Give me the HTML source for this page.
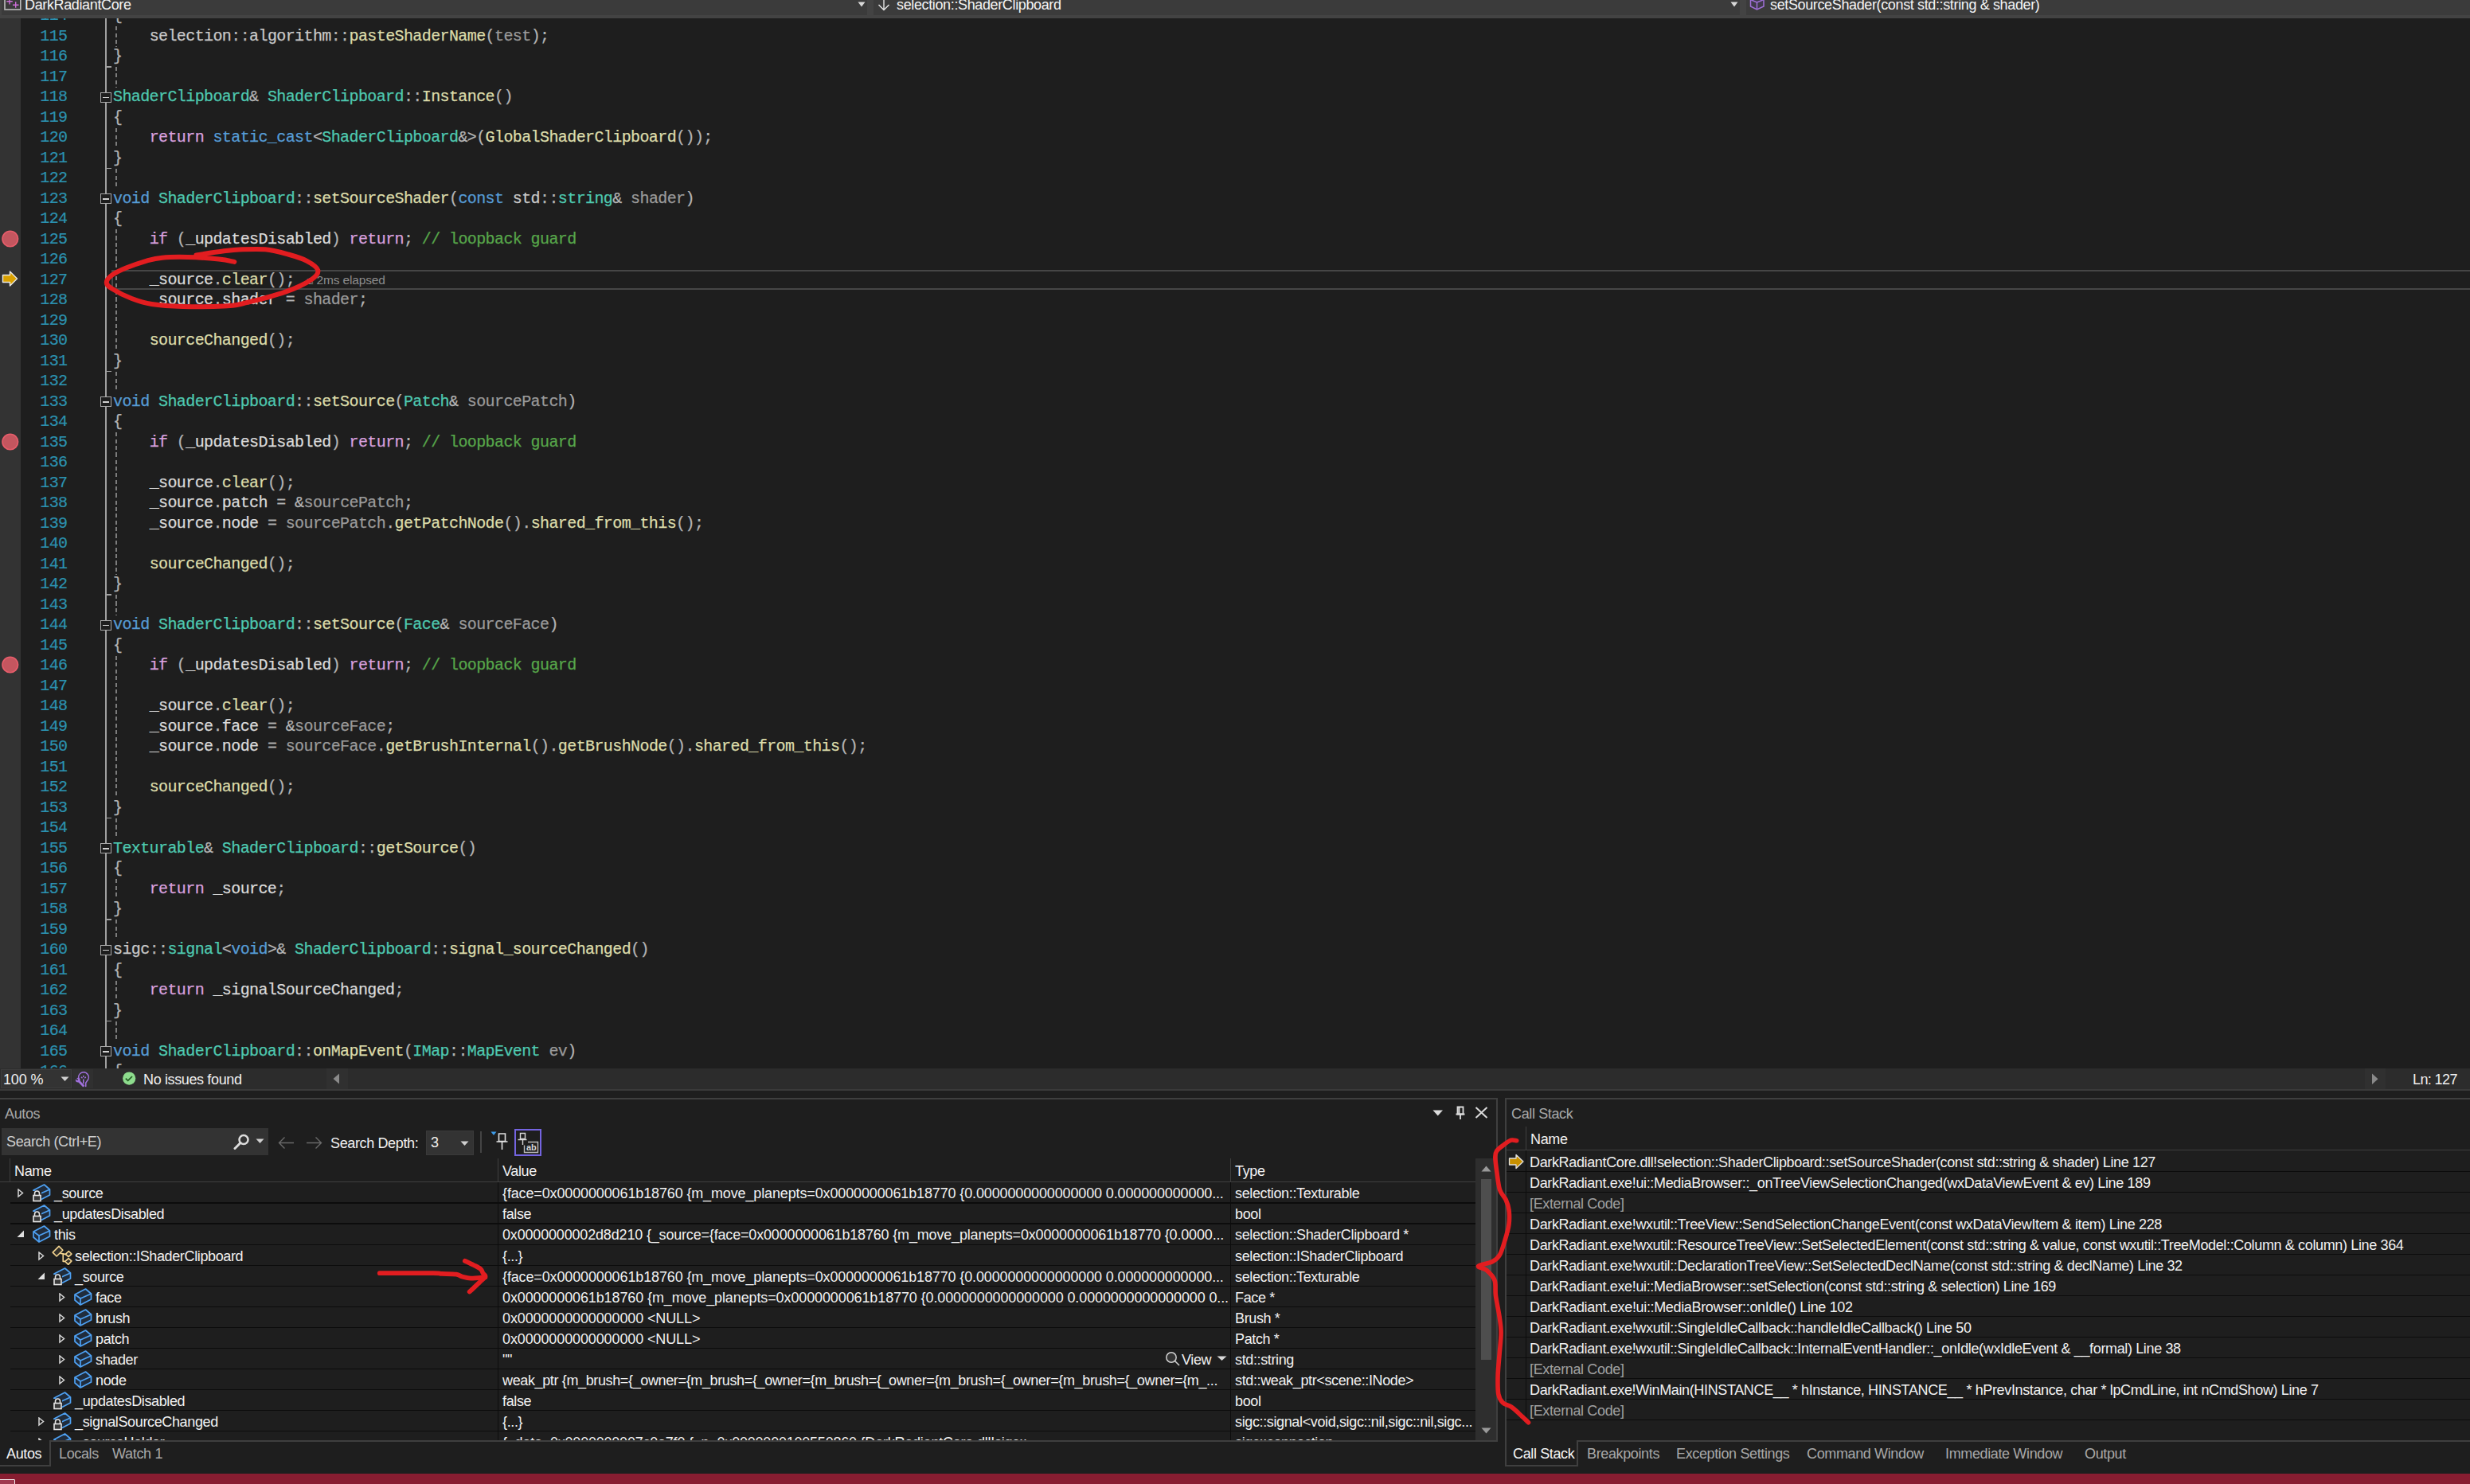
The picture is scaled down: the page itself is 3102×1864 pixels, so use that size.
<!DOCTYPE html><html><head><meta charset="utf-8"><style>
*{box-sizing:border-box}
html,body{margin:0;padding:0}
body{width:3102px;height:1864px;background:#1e1e1e;position:relative;overflow:hidden;font-family:"Liberation Sans",sans-serif;}
.abs{position:absolute}
.ln{position:absolute;left:0;width:84.5px;-webkit-text-stroke:0.2px #2B91AF;text-align:right;font-family:"Liberation Mono",monospace;font-size:20px;letter-spacing:-0.5985px;line-height:25.5px;color:#2B91AF;white-space:pre}
.cl{position:absolute;left:142px;-webkit-text-stroke:0.25px currentColor;font-family:"Liberation Mono",monospace;font-size:20px;letter-spacing:-0.5985px;line-height:25.5px;white-space:pre;color:#DCDCDC}
.ui{font-family:"Liberation Sans",sans-serif;font-size:18px;letter-spacing:-0.3px;white-space:pre;color:#f1f1f1;position:absolute;line-height:22px}
.sep{position:absolute;background:#0c0c0c}
</style></head><body>

<div class="abs" style="left:0;top:0;width:3102px;height:23px;background:#434343"></div>
<div class="abs" style="left:2px;top:0;width:1087px;height:19px;background:#3b3b3b"></div>
<div class="abs" style="left:1097px;top:0;width:1088px;height:19px;background:#3b3b3b"></div>
<div class="abs" style="left:2193px;top:0;width:909px;height:19px;background:#3b3b3b"></div>
<svg class="abs" style="left:1077px;top:2px" width="10" height="7"><path d="M0.5 0.5 L9.5 0.5 L5 6.5Z" fill="#d8d8d8"/></svg>
<svg class="abs" style="left:2173px;top:2px" width="10" height="7"><path d="M0.5 0.5 L9.5 0.5 L5 6.5Z" fill="#d8d8d8"/></svg>
<svg class="abs" style="left:4px;top:-3px" width="24" height="17"><rect x="2" y="-2" width="19.8" height="17" fill="#393939" stroke="#bcbcbc" stroke-width="1.6"/><path d="M8 0 v8.5 M4.3 4.7 h7.5 M15.7 5.2 v7.5 M12 9.2 h7.5" stroke="#cc6ed8" stroke-width="1.4"/></svg>
<div class="ui" style="left:31px;top:-5px;color:#f4f4f4;letter-spacing:-0.366px">DarkRadiantCore</div>
<svg class="abs" style="left:1101px;top:-2px" width="18" height="17"><path d="M9 0 V14 M2.5 8 L9 14.5 L15.5 8" fill="none" stroke="#e6e6e6" stroke-width="1.4"/></svg>
<div class="ui" style="left:1126px;top:-5px;color:#f4f4f4;letter-spacing:-0.366px">selection::ShaderClipboard</div>
<svg class="abs" style="left:2197px;top:-2px" width="20" height="17"><path d="M1.5 1.5 L9.5 -2 L18 1.5 V10 L9.5 14 L1.5 10Z" fill="#3f3a4a" stroke="#a070d8" stroke-width="1.5"/><path d="M1.5 1.5 L9.5 5 L18 1.5 M9.5 5 V14" fill="none" stroke="#a070d8" stroke-width="1.5"/></svg>
<div class="ui" style="left:2223px;top:-5px;color:#f4f4f4;letter-spacing:-0.366px">setSourceShader(const std::string &amp; shader)</div>
<div class="abs" style="left:0;top:23px;width:3102px;height:1319px;overflow:hidden;background:#1e1e1e">
<div class="abs" style="left:0;top:0;width:26px;height:1319px;background:#333333"></div>
<div class="abs" style="left:140px;top:315.5px;width:3000px;height:25px;border:2px solid #464646;border-right:none"></div>
<div class="abs" style="left:132px;top:0;width:2px;height:1319px;background:#a0a0a0"></div>
<div class="abs" style="left:126px;top:92.75px;width:14px;height:13px;border:1.5px solid #a8a8a8;background:#1e1e1e"></div>
<div class="abs" style="left:129px;top:98.5px;width:8px;height:1.5px;background:#d0d0d0"></div>
<div class="abs" style="left:126px;top:220.25px;width:14px;height:13px;border:1.5px solid #a8a8a8;background:#1e1e1e"></div>
<div class="abs" style="left:129px;top:226.0px;width:8px;height:1.5px;background:#d0d0d0"></div>
<div class="abs" style="left:126px;top:475.25px;width:14px;height:13px;border:1.5px solid #a8a8a8;background:#1e1e1e"></div>
<div class="abs" style="left:129px;top:481.0px;width:8px;height:1.5px;background:#d0d0d0"></div>
<div class="abs" style="left:126px;top:755.75px;width:14px;height:13px;border:1.5px solid #a8a8a8;background:#1e1e1e"></div>
<div class="abs" style="left:129px;top:761.5px;width:8px;height:1.5px;background:#d0d0d0"></div>
<div class="abs" style="left:126px;top:1036.25px;width:14px;height:13px;border:1.5px solid #a8a8a8;background:#1e1e1e"></div>
<div class="abs" style="left:129px;top:1042.0px;width:8px;height:1.5px;background:#d0d0d0"></div>
<div class="abs" style="left:126px;top:1163.75px;width:14px;height:13px;border:1.5px solid #a8a8a8;background:#1e1e1e"></div>
<div class="abs" style="left:129px;top:1169.5px;width:8px;height:1.5px;background:#d0d0d0"></div>
<div class="abs" style="left:126px;top:1291.25px;width:14px;height:13px;border:1.5px solid #a8a8a8;background:#1e1e1e"></div>
<div class="abs" style="left:129px;top:1297.0px;width:8px;height:1.5px;background:#d0d0d0"></div>
<div class="abs" style="left:133px;top:60.0px;width:7px;height:1.5px;background:#a0a0a0"></div>
<div class="abs" style="left:133px;top:187.5px;width:7px;height:1.5px;background:#a0a0a0"></div>
<div class="abs" style="left:133px;top:442.5px;width:7px;height:1.5px;background:#a0a0a0"></div>
<div class="abs" style="left:133px;top:723.0px;width:7px;height:1.5px;background:#a0a0a0"></div>
<div class="abs" style="left:133px;top:1003.5px;width:7px;height:1.5px;background:#a0a0a0"></div>
<div class="abs" style="left:133px;top:1131.0px;width:7px;height:1.5px;background:#a0a0a0"></div>
<div class="abs" style="left:133px;top:1258.5px;width:7px;height:1.5px;background:#a0a0a0"></div>
<div class="abs" style="left:145px;top:10.0px;width:2px;height:25.5px;background:repeating-linear-gradient(to bottom,#7c7c7c 0,#7c7c7c 5px,transparent 5px,transparent 8.5px)"></div>
<div class="abs" style="left:145px;top:61.0px;width:2px;height:25.5px;background:repeating-linear-gradient(to bottom,#7c7c7c 0,#7c7c7c 5px,transparent 5px,transparent 8.5px)"></div>
<div class="abs" style="left:145px;top:137.5px;width:2px;height:25.5px;background:repeating-linear-gradient(to bottom,#7c7c7c 0,#7c7c7c 5px,transparent 5px,transparent 8.5px)"></div>
<div class="abs" style="left:145px;top:188.5px;width:2px;height:25.5px;background:repeating-linear-gradient(to bottom,#7c7c7c 0,#7c7c7c 5px,transparent 5px,transparent 8.5px)"></div>
<div class="abs" style="left:145px;top:265.0px;width:2px;height:25.5px;background:repeating-linear-gradient(to bottom,#7c7c7c 0,#7c7c7c 5px,transparent 5px,transparent 8.5px)"></div>
<div class="abs" style="left:145px;top:290.5px;width:2px;height:25.5px;background:repeating-linear-gradient(to bottom,#7c7c7c 0,#7c7c7c 5px,transparent 5px,transparent 8.5px)"></div>
<div class="abs" style="left:145px;top:316.0px;width:2px;height:25.5px;background:repeating-linear-gradient(to bottom,#7c7c7c 0,#7c7c7c 5px,transparent 5px,transparent 8.5px)"></div>
<div class="abs" style="left:145px;top:341.5px;width:2px;height:25.5px;background:repeating-linear-gradient(to bottom,#7c7c7c 0,#7c7c7c 5px,transparent 5px,transparent 8.5px)"></div>
<div class="abs" style="left:145px;top:367.0px;width:2px;height:25.5px;background:repeating-linear-gradient(to bottom,#7c7c7c 0,#7c7c7c 5px,transparent 5px,transparent 8.5px)"></div>
<div class="abs" style="left:145px;top:392.5px;width:2px;height:25.5px;background:repeating-linear-gradient(to bottom,#7c7c7c 0,#7c7c7c 5px,transparent 5px,transparent 8.5px)"></div>
<div class="abs" style="left:145px;top:443.5px;width:2px;height:25.5px;background:repeating-linear-gradient(to bottom,#7c7c7c 0,#7c7c7c 5px,transparent 5px,transparent 8.5px)"></div>
<div class="abs" style="left:145px;top:520.0px;width:2px;height:25.5px;background:repeating-linear-gradient(to bottom,#7c7c7c 0,#7c7c7c 5px,transparent 5px,transparent 8.5px)"></div>
<div class="abs" style="left:145px;top:545.5px;width:2px;height:25.5px;background:repeating-linear-gradient(to bottom,#7c7c7c 0,#7c7c7c 5px,transparent 5px,transparent 8.5px)"></div>
<div class="abs" style="left:145px;top:571.0px;width:2px;height:25.5px;background:repeating-linear-gradient(to bottom,#7c7c7c 0,#7c7c7c 5px,transparent 5px,transparent 8.5px)"></div>
<div class="abs" style="left:145px;top:596.5px;width:2px;height:25.5px;background:repeating-linear-gradient(to bottom,#7c7c7c 0,#7c7c7c 5px,transparent 5px,transparent 8.5px)"></div>
<div class="abs" style="left:145px;top:622.0px;width:2px;height:25.5px;background:repeating-linear-gradient(to bottom,#7c7c7c 0,#7c7c7c 5px,transparent 5px,transparent 8.5px)"></div>
<div class="abs" style="left:145px;top:647.5px;width:2px;height:25.5px;background:repeating-linear-gradient(to bottom,#7c7c7c 0,#7c7c7c 5px,transparent 5px,transparent 8.5px)"></div>
<div class="abs" style="left:145px;top:673.0px;width:2px;height:25.5px;background:repeating-linear-gradient(to bottom,#7c7c7c 0,#7c7c7c 5px,transparent 5px,transparent 8.5px)"></div>
<div class="abs" style="left:145px;top:724.0px;width:2px;height:25.5px;background:repeating-linear-gradient(to bottom,#7c7c7c 0,#7c7c7c 5px,transparent 5px,transparent 8.5px)"></div>
<div class="abs" style="left:145px;top:800.5px;width:2px;height:25.5px;background:repeating-linear-gradient(to bottom,#7c7c7c 0,#7c7c7c 5px,transparent 5px,transparent 8.5px)"></div>
<div class="abs" style="left:145px;top:826.0px;width:2px;height:25.5px;background:repeating-linear-gradient(to bottom,#7c7c7c 0,#7c7c7c 5px,transparent 5px,transparent 8.5px)"></div>
<div class="abs" style="left:145px;top:851.5px;width:2px;height:25.5px;background:repeating-linear-gradient(to bottom,#7c7c7c 0,#7c7c7c 5px,transparent 5px,transparent 8.5px)"></div>
<div class="abs" style="left:145px;top:877.0px;width:2px;height:25.5px;background:repeating-linear-gradient(to bottom,#7c7c7c 0,#7c7c7c 5px,transparent 5px,transparent 8.5px)"></div>
<div class="abs" style="left:145px;top:902.5px;width:2px;height:25.5px;background:repeating-linear-gradient(to bottom,#7c7c7c 0,#7c7c7c 5px,transparent 5px,transparent 8.5px)"></div>
<div class="abs" style="left:145px;top:928.0px;width:2px;height:25.5px;background:repeating-linear-gradient(to bottom,#7c7c7c 0,#7c7c7c 5px,transparent 5px,transparent 8.5px)"></div>
<div class="abs" style="left:145px;top:953.5px;width:2px;height:25.5px;background:repeating-linear-gradient(to bottom,#7c7c7c 0,#7c7c7c 5px,transparent 5px,transparent 8.5px)"></div>
<div class="abs" style="left:145px;top:1004.5px;width:2px;height:25.5px;background:repeating-linear-gradient(to bottom,#7c7c7c 0,#7c7c7c 5px,transparent 5px,transparent 8.5px)"></div>
<div class="abs" style="left:145px;top:1081.0px;width:2px;height:25.5px;background:repeating-linear-gradient(to bottom,#7c7c7c 0,#7c7c7c 5px,transparent 5px,transparent 8.5px)"></div>
<div class="abs" style="left:145px;top:1132.0px;width:2px;height:25.5px;background:repeating-linear-gradient(to bottom,#7c7c7c 0,#7c7c7c 5px,transparent 5px,transparent 8.5px)"></div>
<div class="abs" style="left:145px;top:1208.5px;width:2px;height:25.5px;background:repeating-linear-gradient(to bottom,#7c7c7c 0,#7c7c7c 5px,transparent 5px,transparent 8.5px)"></div>
<div class="abs" style="left:145px;top:1259.5px;width:2px;height:25.5px;background:repeating-linear-gradient(to bottom,#7c7c7c 0,#7c7c7c 5px,transparent 5px,transparent 8.5px)"></div>
<div class="ln" style="top:-15.58px">114</div>
<div class="cl" style="top:-15.58px"><span style="color:#B4B4B4">{</span></div>
<div class="ln" style="top:9.92px">115</div>
<div class="cl" style="top:9.92px"><span style="color:#B4B4B4">    </span><span style="color:#C8C8C8">selection</span><span style="color:#B4B4B4">::</span><span style="color:#C8C8C8">algorithm</span><span style="color:#B4B4B4">::</span><span style="color:#DCDCAA">pasteShaderName</span><span style="color:#B4B4B4">(</span><span style="color:#9A9A9A">test</span><span style="color:#B4B4B4">);</span></div>
<div class="ln" style="top:35.42px">116</div>
<div class="cl" style="top:35.42px"><span style="color:#B4B4B4">}</span></div>
<div class="ln" style="top:60.92px">117</div>
<div class="ln" style="top:86.42px">118</div>
<div class="cl" style="top:86.42px"><span style="color:#4EC9B0">ShaderClipboard</span><span style="color:#B4B4B4">&amp;</span><span style="color:#B4B4B4"> </span><span style="color:#4EC9B0">ShaderClipboard</span><span style="color:#B4B4B4">::</span><span style="color:#DCDCAA">Instance</span><span style="color:#B4B4B4">()</span></div>
<div class="ln" style="top:111.92px">119</div>
<div class="cl" style="top:111.92px"><span style="color:#B4B4B4">{</span></div>
<div class="ln" style="top:137.42px">120</div>
<div class="cl" style="top:137.42px"><span style="color:#B4B4B4">    </span><span style="color:#D8A0DF">return</span><span style="color:#B4B4B4"> </span><span style="color:#569CD6">static_cast</span><span style="color:#B4B4B4">&lt;</span><span style="color:#4EC9B0">ShaderClipboard</span><span style="color:#B4B4B4">&amp;&gt;</span><span style="color:#B4B4B4">(</span><span style="color:#DCDCAA">GlobalShaderClipboard</span><span style="color:#B4B4B4">());</span></div>
<div class="ln" style="top:162.92px">121</div>
<div class="cl" style="top:162.92px"><span style="color:#B4B4B4">}</span></div>
<div class="ln" style="top:188.42px">122</div>
<div class="ln" style="top:213.92px">123</div>
<div class="cl" style="top:213.92px"><span style="color:#569CD6">void</span><span style="color:#B4B4B4"> </span><span style="color:#4EC9B0">ShaderClipboard</span><span style="color:#B4B4B4">::</span><span style="color:#DCDCAA">setSourceShader</span><span style="color:#B4B4B4">(</span><span style="color:#569CD6">const</span><span style="color:#B4B4B4"> </span><span style="color:#C8C8C8">std</span><span style="color:#B4B4B4">::</span><span style="color:#4EC9B0">string</span><span style="color:#B4B4B4">&amp;</span><span style="color:#B4B4B4"> </span><span style="color:#9A9A9A">shader</span><span style="color:#B4B4B4">)</span></div>
<div class="ln" style="top:239.42px">124</div>
<div class="cl" style="top:239.42px"><span style="color:#B4B4B4">{</span></div>
<div class="ln" style="top:264.92px">125</div>
<div class="cl" style="top:264.92px"><span style="color:#B4B4B4">    </span><span style="color:#D8A0DF">if</span><span style="color:#B4B4B4"> (</span><span style="color:#DADADA">_updatesDisabled</span><span style="color:#B4B4B4">) </span><span style="color:#D8A0DF">return</span><span style="color:#B4B4B4">; </span><span style="color:#57A64A">// loopback guard</span></div>
<div class="ln" style="top:290.42px">126</div>
<div class="ln" style="top:315.92px">127</div>
<div class="cl" style="top:315.92px"><span style="color:#B4B4B4">    </span><span style="color:#DADADA">_source</span><span style="color:#B4B4B4">.</span><span style="color:#DCDCAA">clear</span><span style="color:#B4B4B4">();</span></div>
<div class="ln" style="top:341.42px">128</div>
<div class="cl" style="top:341.42px"><span style="color:#B4B4B4">    </span><span style="color:#DADADA">_source</span><span style="color:#B4B4B4">.</span><span style="color:#DADADA">shader</span><span style="color:#B4B4B4"> </span><span style="color:#B4B4B4">=</span><span style="color:#B4B4B4"> </span><span style="color:#9A9A9A">shader</span><span style="color:#B4B4B4">;</span></div>
<div class="ln" style="top:366.92px">129</div>
<div class="ln" style="top:392.42px">130</div>
<div class="cl" style="top:392.42px"><span style="color:#B4B4B4">    </span><span style="color:#DCDCAA">sourceChanged</span><span style="color:#B4B4B4">();</span></div>
<div class="ln" style="top:417.92px">131</div>
<div class="cl" style="top:417.92px"><span style="color:#B4B4B4">}</span></div>
<div class="ln" style="top:443.42px">132</div>
<div class="ln" style="top:468.92px">133</div>
<div class="cl" style="top:468.92px"><span style="color:#569CD6">void</span><span style="color:#B4B4B4"> </span><span style="color:#4EC9B0">ShaderClipboard</span><span style="color:#B4B4B4">::</span><span style="color:#DCDCAA">setSource</span><span style="color:#B4B4B4">(</span><span style="color:#4EC9B0">Patch</span><span style="color:#B4B4B4">&amp;</span><span style="color:#B4B4B4"> </span><span style="color:#9A9A9A">sourcePatch</span><span style="color:#B4B4B4">)</span></div>
<div class="ln" style="top:494.42px">134</div>
<div class="cl" style="top:494.42px"><span style="color:#B4B4B4">{</span></div>
<div class="ln" style="top:519.92px">135</div>
<div class="cl" style="top:519.92px"><span style="color:#B4B4B4">    </span><span style="color:#D8A0DF">if</span><span style="color:#B4B4B4"> (</span><span style="color:#DADADA">_updatesDisabled</span><span style="color:#B4B4B4">) </span><span style="color:#D8A0DF">return</span><span style="color:#B4B4B4">; </span><span style="color:#57A64A">// loopback guard</span></div>
<div class="ln" style="top:545.42px">136</div>
<div class="ln" style="top:570.92px">137</div>
<div class="cl" style="top:570.92px"><span style="color:#B4B4B4">    </span><span style="color:#DADADA">_source</span><span style="color:#B4B4B4">.</span><span style="color:#DCDCAA">clear</span><span style="color:#B4B4B4">();</span></div>
<div class="ln" style="top:596.42px">138</div>
<div class="cl" style="top:596.42px"><span style="color:#B4B4B4">    </span><span style="color:#DADADA">_source</span><span style="color:#B4B4B4">.</span><span style="color:#DADADA">patch</span><span style="color:#B4B4B4"> </span><span style="color:#B4B4B4">=</span><span style="color:#B4B4B4"> </span><span style="color:#B4B4B4">&amp;</span><span style="color:#9A9A9A">sourcePatch</span><span style="color:#B4B4B4">;</span></div>
<div class="ln" style="top:621.92px">139</div>
<div class="cl" style="top:621.92px"><span style="color:#B4B4B4">    </span><span style="color:#DADADA">_source</span><span style="color:#B4B4B4">.</span><span style="color:#DADADA">node</span><span style="color:#B4B4B4"> </span><span style="color:#B4B4B4">=</span><span style="color:#B4B4B4"> </span><span style="color:#9A9A9A">sourcePatch</span><span style="color:#B4B4B4">.</span><span style="color:#DCDCAA">getPatchNode</span><span style="color:#B4B4B4">()</span><span style="color:#B4B4B4">.</span><span style="color:#DCDCAA">shared_from_this</span><span style="color:#B4B4B4">();</span></div>
<div class="ln" style="top:647.42px">140</div>
<div class="ln" style="top:672.92px">141</div>
<div class="cl" style="top:672.92px"><span style="color:#B4B4B4">    </span><span style="color:#DCDCAA">sourceChanged</span><span style="color:#B4B4B4">();</span></div>
<div class="ln" style="top:698.42px">142</div>
<div class="cl" style="top:698.42px"><span style="color:#B4B4B4">}</span></div>
<div class="ln" style="top:723.92px">143</div>
<div class="ln" style="top:749.42px">144</div>
<div class="cl" style="top:749.42px"><span style="color:#569CD6">void</span><span style="color:#B4B4B4"> </span><span style="color:#4EC9B0">ShaderClipboard</span><span style="color:#B4B4B4">::</span><span style="color:#DCDCAA">setSource</span><span style="color:#B4B4B4">(</span><span style="color:#4EC9B0">Face</span><span style="color:#B4B4B4">&amp;</span><span style="color:#B4B4B4"> </span><span style="color:#9A9A9A">sourceFace</span><span style="color:#B4B4B4">)</span></div>
<div class="ln" style="top:774.92px">145</div>
<div class="cl" style="top:774.92px"><span style="color:#B4B4B4">{</span></div>
<div class="ln" style="top:800.42px">146</div>
<div class="cl" style="top:800.42px"><span style="color:#B4B4B4">    </span><span style="color:#D8A0DF">if</span><span style="color:#B4B4B4"> (</span><span style="color:#DADADA">_updatesDisabled</span><span style="color:#B4B4B4">) </span><span style="color:#D8A0DF">return</span><span style="color:#B4B4B4">; </span><span style="color:#57A64A">// loopback guard</span></div>
<div class="ln" style="top:825.92px">147</div>
<div class="ln" style="top:851.42px">148</div>
<div class="cl" style="top:851.42px"><span style="color:#B4B4B4">    </span><span style="color:#DADADA">_source</span><span style="color:#B4B4B4">.</span><span style="color:#DCDCAA">clear</span><span style="color:#B4B4B4">();</span></div>
<div class="ln" style="top:876.92px">149</div>
<div class="cl" style="top:876.92px"><span style="color:#B4B4B4">    </span><span style="color:#DADADA">_source</span><span style="color:#B4B4B4">.</span><span style="color:#DADADA">face</span><span style="color:#B4B4B4"> </span><span style="color:#B4B4B4">=</span><span style="color:#B4B4B4"> </span><span style="color:#B4B4B4">&amp;</span><span style="color:#9A9A9A">sourceFace</span><span style="color:#B4B4B4">;</span></div>
<div class="ln" style="top:902.42px">150</div>
<div class="cl" style="top:902.42px"><span style="color:#B4B4B4">    </span><span style="color:#DADADA">_source</span><span style="color:#B4B4B4">.</span><span style="color:#DADADA">node</span><span style="color:#B4B4B4"> </span><span style="color:#B4B4B4">=</span><span style="color:#B4B4B4"> </span><span style="color:#9A9A9A">sourceFace</span><span style="color:#B4B4B4">.</span><span style="color:#DCDCAA">getBrushInternal</span><span style="color:#B4B4B4">()</span><span style="color:#B4B4B4">.</span><span style="color:#DCDCAA">getBrushNode</span><span style="color:#B4B4B4">()</span><span style="color:#B4B4B4">.</span><span style="color:#DCDCAA">shared_from_this</span><span style="color:#B4B4B4">();</span></div>
<div class="ln" style="top:927.92px">151</div>
<div class="ln" style="top:953.42px">152</div>
<div class="cl" style="top:953.42px"><span style="color:#B4B4B4">    </span><span style="color:#DCDCAA">sourceChanged</span><span style="color:#B4B4B4">();</span></div>
<div class="ln" style="top:978.92px">153</div>
<div class="cl" style="top:978.92px"><span style="color:#B4B4B4">}</span></div>
<div class="ln" style="top:1004.42px">154</div>
<div class="ln" style="top:1029.92px">155</div>
<div class="cl" style="top:1029.92px"><span style="color:#4EC9B0">Texturable</span><span style="color:#B4B4B4">&amp;</span><span style="color:#B4B4B4"> </span><span style="color:#4EC9B0">ShaderClipboard</span><span style="color:#B4B4B4">::</span><span style="color:#DCDCAA">getSource</span><span style="color:#B4B4B4">()</span></div>
<div class="ln" style="top:1055.42px">156</div>
<div class="cl" style="top:1055.42px"><span style="color:#B4B4B4">{</span></div>
<div class="ln" style="top:1080.92px">157</div>
<div class="cl" style="top:1080.92px"><span style="color:#B4B4B4">    </span><span style="color:#D8A0DF">return</span><span style="color:#B4B4B4"> </span><span style="color:#DADADA">_source</span><span style="color:#B4B4B4">;</span></div>
<div class="ln" style="top:1106.42px">158</div>
<div class="cl" style="top:1106.42px"><span style="color:#B4B4B4">}</span></div>
<div class="ln" style="top:1131.92px">159</div>
<div class="ln" style="top:1157.42px">160</div>
<div class="cl" style="top:1157.42px"><span style="color:#C8C8C8">sigc</span><span style="color:#B4B4B4">::</span><span style="color:#4EC9B0">signal</span><span style="color:#B4B4B4">&lt;</span><span style="color:#569CD6">void</span><span style="color:#B4B4B4">&gt;&amp;</span><span style="color:#B4B4B4"> </span><span style="color:#4EC9B0">ShaderClipboard</span><span style="color:#B4B4B4">::</span><span style="color:#DCDCAA">signal_sourceChanged</span><span style="color:#B4B4B4">()</span></div>
<div class="ln" style="top:1182.92px">161</div>
<div class="cl" style="top:1182.92px"><span style="color:#B4B4B4">{</span></div>
<div class="ln" style="top:1208.42px">162</div>
<div class="cl" style="top:1208.42px"><span style="color:#B4B4B4">    </span><span style="color:#D8A0DF">return</span><span style="color:#B4B4B4"> </span><span style="color:#DADADA">_signalSourceChanged</span><span style="color:#B4B4B4">;</span></div>
<div class="ln" style="top:1233.92px">163</div>
<div class="cl" style="top:1233.92px"><span style="color:#B4B4B4">}</span></div>
<div class="ln" style="top:1259.42px">164</div>
<div class="ln" style="top:1284.92px">165</div>
<div class="cl" style="top:1284.92px"><span style="color:#569CD6">void</span><span style="color:#B4B4B4"> </span><span style="color:#4EC9B0">ShaderClipboard</span><span style="color:#B4B4B4">::</span><span style="color:#DCDCAA">onMapEvent</span><span style="color:#B4B4B4">(</span><span style="color:#4EC9B0">IMap</span><span style="color:#B4B4B4">::</span><span style="color:#4EC9B0">MapEvent</span><span style="color:#B4B4B4"> </span><span style="color:#9A9A9A">ev</span><span style="color:#B4B4B4">)</span></div>
<div class="ln" style="top:1310.42px">166</div>
<div class="cl" style="top:1310.42px"><span style="color:#B4B4B4">{</span></div>
<div class="abs" style="left:385px;top:320.0px;font-size:15.5px;color:#8c8c8c;white-space:pre;letter-spacing:-0.15px">≤ 2ms elapsed</div>
<svg class="abs" style="left:1px;top:264.75px" width="24" height="24"><circle cx="11.8" cy="12" r="9.8" fill="#c4565f" stroke="#e85d6b" stroke-width="1.6"/></svg>
<svg class="abs" style="left:1px;top:519.75px" width="24" height="24"><circle cx="11.8" cy="12" r="9.8" fill="#c4565f" stroke="#e85d6b" stroke-width="1.6"/></svg>
<svg class="abs" style="left:1px;top:800.25px" width="24" height="24"><circle cx="11.8" cy="12" r="9.8" fill="#c4565f" stroke="#e85d6b" stroke-width="1.6"/></svg>
<svg class="abs" style="left:1px;top:315.25px" width="24" height="24"><path d="M2.5 7.5 H11.5 V3 L20.5 12 L11.5 21 V16.5 H2.5Z" fill="#d9a000" stroke="#e8e8e8" stroke-width="1.4" stroke-linejoin="round"/></svg>
</div>
<div class="abs" style="left:0;top:1342px;width:3102px;height:26px;background:#2c2c2c"></div>
<div class="abs" style="left:0;top:1368px;width:3102px;height:1.5px;background:#3a3a3a"></div>
<div class="abs" style="left:1px;top:1343px;width:89px;height:24px;background:#333333;border:1px solid #3c3c3c"></div>
<div class="ui" style="left:4px;top:1345px;color:#f0f0f0;letter-spacing:-0.146px">100 %</div>
<svg class="abs" style="left:76px;top:1352px" width="11" height="7"><path d="M0.5 0.5 H10.5 L5.5 6Z" fill="#d0d0d0"/></svg>
<div class="abs" style="left:91px;top:1343px;width:26px;height:24px;background:#303030"></div>
<svg class="abs" style="left:94px;top:1345px" width="20" height="21"><g stroke="#a070dc" fill="none" stroke-width="1.6" stroke-linecap="round"><path d="M5.2 10.5 A6.3 6.3 0 1 1 15.6 12.4 L13.7 15.2 V19.5"/><path d="M10.8 11 V15.5 M8.4 8.2 L9 8.8 M10.8 6.6 V7.4 M13.4 8.2 L12.8 8.8"/></g><path d="M4.8 12.8 L10.6 18.8" stroke="#a070dc" stroke-width="2.8" stroke-linecap="round"/><circle cx="3.8" cy="11.6" r="2.9" fill="#a070dc"/><path d="M1 9.2 L3.6 11.6" stroke="#2c2c2c" stroke-width="1.6"/></svg>
<svg class="abs" style="left:153px;top:1346px" width="19" height="19"><circle cx="9.2" cy="8.6" r="8.1" fill="#8ddc8d"/><path d="M4.8 8.6 L7.7 11.4 L13 6" fill="none" stroke="#235c23" stroke-width="1.7"/></svg>
<div class="ui" style="left:180px;top:1345px;color:#f0f0f0;letter-spacing:-0.366px">No issues found</div>
<div class="abs" style="left:410px;top:1342px;width:27px;height:26px;background:#303030"></div>
<svg class="abs" style="left:418px;top:1348px" width="9" height="14"><path d="M8 0.5 V13.5 L0.5 7Z" fill="#8a8a8a"/></svg>
<div class="abs" style="left:2970px;top:1342px;width:26px;height:26px;background:#303030"></div>
<svg class="abs" style="left:2978px;top:1348px" width="9" height="15"><path d="M1 0.5 V14 L8.5 7.25Z" fill="#8a8a8a"/></svg>
<div class="ui" style="left:3030px;top:1345px;color:#f0f0f0;letter-spacing:-0.6px">Ln: 127</div>
<div class="abs" style="left:-2px;top:1379px;width:1883px;height:432px;border:2px solid #3f3f3f;border-bottom:none"></div>
<div class="abs" style="left:1890px;top:1379px;width:1214px;height:463px;border:2px solid #3f3f3f;border-bottom:none;border-right:none"></div>
<div class="ui" style="left:6px;top:1388px;color:#a8a8a8;letter-spacing:-0.366px">Autos</div>
<svg class="abs" style="left:1799px;top:1394px" width="14" height="8"><path d="M0.5 0.5 H13 L6.75 7.5Z" fill="#dcdcdc"/></svg>
<svg class="abs" style="left:1828px;top:1389px" width="12" height="18"><path d="M2.5 1.5 H9.5 V10.5 H2.5Z M4.5 2 V10" fill="none" stroke="#dcdcdc" stroke-width="1.8"/><path d="M0.5 10.5 H11.5 M6 10.5 V17" stroke="#dcdcdc" stroke-width="1.8"/></svg>
<svg class="abs" style="left:1852px;top:1390px" width="17" height="15"><path d="M1.5 1 L15.5 14 M15.5 1 L1.5 14" stroke="#dcdcdc" stroke-width="2"/></svg>
<div class="abs" style="left:2px;top:1417px;width:335px;height:34px;background:#333333"></div>
<div class="ui" style="left:8px;top:1423px;color:#cfcfcf;letter-spacing:-0.366px">Search (Ctrl+E)</div>
<svg class="abs" style="left:293px;top:1424px" width="21" height="20"><circle cx="13" cy="7.5" r="5.5" fill="none" stroke="#dcdcdc" stroke-width="2.5"/><path d="M9 11.5 L2 18.5" stroke="#dcdcdc" stroke-width="3" stroke-linecap="round"/></svg>
<svg class="abs" style="left:321px;top:1430px" width="11" height="7"><path d="M0.5 0.5 H10.5 L5.5 6Z" fill="#d0d0d0"/></svg>
<svg class="abs" style="left:349px;top:1427px" width="21" height="17"><path d="M20 8.5 H1.5 M8.5 1.5 L1.5 8.5 L8.5 15.5" fill="none" stroke="#6a6a6a" stroke-width="1.4"/></svg>
<svg class="abs" style="left:384px;top:1427px" width="21" height="17"><path d="M1 8.5 H19.5 M12.5 1.5 L19.5 8.5 L12.5 15.5" fill="none" stroke="#6a6a6a" stroke-width="1.4"/></svg>
<div class="ui" style="left:415px;top:1425px;color:#f0f0f0;letter-spacing:-0.366px">Search Depth:</div>
<div class="abs" style="left:535px;top:1420px;width:60px;height:31px;background:#333333;border:1px solid #3a3a3a"></div>
<div class="ui" style="left:541px;top:1424px;color:#f0f0f0;letter-spacing:0.000px">3</div>
<svg class="abs" style="left:578px;top:1433px" width="11" height="7"><path d="M0.5 0.5 H10.5 L5.5 6Z" fill="#d0d0d0"/></svg>
<div class="abs" style="left:603px;top:1421px;width:1.5px;height:27px;background:#444"></div>
<svg class="abs" style="left:616px;top:1421px" width="24" height="28"><path d="M0.5 0.5 H7.5 L4 5Z" fill="#3d9be9"/><path d="M10.5 3 H18.5 V12.5 H10.5Z" fill="none" stroke="#e0e0e0" stroke-width="1.6"/><path d="M7.5 13 H21.5 M14.5 13 V23" stroke="#e0e0e0" stroke-width="1.6"/></svg>
<div class="abs" style="left:646px;top:1418px;width:34px;height:34px;border:2px solid #7464e0"></div>
<svg class="abs" style="left:650px;top:1422px" width="28" height="28"><path d="M3.5 1.5 H9.5 V8.5 H3.5Z" fill="none" stroke="#d8d8d8" stroke-width="1.4"/><path d="M0.5 9.5 H11.5 M6.5 9.5 V16" stroke="#d8d8d8" stroke-width="1.4"/><path d="M8.5 16.5 V25.5 H25.5 V12.5 H13" fill="none" stroke="#bcbcbc" stroke-width="1.4"/><text x="11" y="23" font-family="Liberation Sans" font-size="11" fill="#d8d8d8" font-weight="bold">ab</text></svg>
<div class="abs" style="left:12px;top:1455px;width:1px;height:29px;background:#3f3f3f"></div>
<div class="abs" style="left:625px;top:1455px;width:1px;height:29px;background:#3f3f3f"></div>
<div class="abs" style="left:1545px;top:1455px;width:1px;height:29px;background:#3f3f3f"></div>
<div class="abs" style="left:0;top:1484px;width:1853px;height:1px;background:#3f3f3f"></div>
<div class="ui" style="left:18px;top:1460px;letter-spacing:-0.366px">Name</div>
<div class="ui" style="left:631px;top:1460px;letter-spacing:-0.366px">Value</div>
<div class="ui" style="left:1551px;top:1460px;letter-spacing:-0.366px">Type</div>
<div class="abs" style="left:0;top:1485.4px;width:1853px;height:323.6px;overflow:hidden">
<svg class="abs" style="left:22px;top:8.0px" width="8" height="12"><path d="M1 1 L6.5 5.5 L1 10Z" fill="none" stroke="#d8d8d8" stroke-width="1.5"/></svg>
<svg class="abs" style="left:41px;top:2.0px" width="23" height="23"><g stroke="#4ea1f3" stroke-width="1.7" stroke-linejoin="round"><path d="M1 8 L14.5 1 L21.5 7 V14 L8 21 L1 15Z" fill="#202c3c"/><path d="M1 8 L8 13 L21.5 7 M8 13 V21" fill="none"/></g><g><rect x="0" y="9" width="11" height="14" fill="#1e1e1e"/><path d="M2.5 14.5 V12 A3 3 0 0 1 8.5 12 V14.5" fill="none" stroke="#e6e6e6" stroke-width="1.6"/><rect x="1" y="14.5" width="9" height="7" fill="#3a3a3a" stroke="#e6e6e6" stroke-width="1.6"/></g></svg>
<div class="ui" style="left:68px;top:3.0px;letter-spacing:-0.366px">_source</div>
<div class="ui" style="left:631px;top:3.0px;width:912px;overflow:hidden;letter-spacing:-0.134px">{face=0x0000000061b18760 {m_move_planepts=0x0000000061b18770 {0.0000000000000000 0.000000000000...</div>
<div class="ui" style="left:1551px;top:3.0px;width:300px;overflow:hidden;letter-spacing:-0.366px">selection::Texturable</div>
<div class="sep" style="left:13px;top:25.05px;width:1840px;height:1.3px"></div>
<svg class="abs" style="left:41px;top:28.05px" width="23" height="23"><g stroke="#4ea1f3" stroke-width="1.7" stroke-linejoin="round"><path d="M1 8 L14.5 1 L21.5 7 V14 L8 21 L1 15Z" fill="#202c3c"/><path d="M1 8 L8 13 L21.5 7 M8 13 V21" fill="none"/></g><g><rect x="0" y="9" width="11" height="14" fill="#1e1e1e"/><path d="M2.5 14.5 V12 A3 3 0 0 1 8.5 12 V14.5" fill="none" stroke="#e6e6e6" stroke-width="1.6"/><rect x="1" y="14.5" width="9" height="7" fill="#3a3a3a" stroke="#e6e6e6" stroke-width="1.6"/></g></svg>
<div class="ui" style="left:68px;top:29.05px;letter-spacing:-0.366px">_updatesDisabled</div>
<div class="ui" style="left:631px;top:29.05px;width:912px;overflow:hidden;letter-spacing:-0.366px">false</div>
<div class="ui" style="left:1551px;top:29.05px;width:300px;overflow:hidden;letter-spacing:-0.366px">bool</div>
<div class="sep" style="left:13px;top:51.10px;width:1840px;height:1.3px"></div>
<svg class="abs" style="left:21px;top:60.1px" width="10" height="10"><path d="M9 0.5 V9 H0.5Z" fill="#e0e0e0"/></svg>
<svg class="abs" style="left:41px;top:54.1px" width="23" height="23"><g stroke="#4ea1f3" stroke-width="1.7" stroke-linejoin="round"><path d="M1 8 L14.5 1 L21.5 7 V14 L8 21 L1 15Z" fill="#202c3c"/><path d="M1 8 L8 13 L21.5 7 M8 13 V21" fill="none"/></g></svg>
<div class="ui" style="left:68px;top:55.1px;letter-spacing:-0.366px">this</div>
<div class="ui" style="left:631px;top:55.1px;width:912px;overflow:hidden;letter-spacing:-0.174px">0x0000000002d8d210 {_source={face=0x0000000061b18760 {m_move_planepts=0x0000000061b18770 {0.0000...</div>
<div class="ui" style="left:1551px;top:55.1px;width:300px;overflow:hidden;letter-spacing:-0.366px">selection::ShaderClipboard *</div>
<div class="sep" style="left:13px;top:77.15px;width:1840px;height:1.3px"></div>
<svg class="abs" style="left:48px;top:86.15px" width="8" height="12"><path d="M1 1 L6.5 5.5 L1 10Z" fill="none" stroke="#d8d8d8" stroke-width="1.5"/></svg>
<svg class="abs" style="left:65px;top:78.15px" width="27" height="27"><g stroke="#f2d38f" stroke-width="1.6" fill="#33302a" stroke-linejoin="round"><path d="M10.5 10.1 L17.8 11.6 M14.2 10.9 V20.4 H17.2" fill="none"/><path d="M1.2 9.15 L9 1.35 L13.9 6.25 L6.1 13.95Z"/><path d="M17.4 11.35 L21.3 7.55 L24.9 11.05 L21 14.65Z"/><path d="M16.8 20.45 L21 16.55 L24.9 19.85 L20.7 24.35Z"/></g></svg>
<div class="ui" style="left:94px;top:81.15px;letter-spacing:-0.366px">selection::IShaderClipboard</div>
<div class="ui" style="left:631px;top:81.15px;width:912px;overflow:hidden;letter-spacing:-0.366px">{...}</div>
<div class="ui" style="left:1551px;top:81.15px;width:300px;overflow:hidden;letter-spacing:-0.366px">selection::IShaderClipboard</div>
<div class="sep" style="left:13px;top:103.20px;width:1840px;height:1.3px"></div>
<svg class="abs" style="left:47px;top:112.2px" width="10" height="10"><path d="M9 0.5 V9 H0.5Z" fill="#e0e0e0"/></svg>
<svg class="abs" style="left:67px;top:106.2px" width="23" height="23"><g stroke="#4ea1f3" stroke-width="1.7" stroke-linejoin="round"><path d="M1 8 L14.5 1 L21.5 7 V14 L8 21 L1 15Z" fill="#202c3c"/><path d="M1 8 L8 13 L21.5 7 M8 13 V21" fill="none"/></g><g><rect x="0" y="9" width="11" height="14" fill="#1e1e1e"/><path d="M2.5 14.5 V12 A3 3 0 0 1 8.5 12 V14.5" fill="none" stroke="#e6e6e6" stroke-width="1.6"/><rect x="1" y="14.5" width="9" height="7" fill="#3a3a3a" stroke="#e6e6e6" stroke-width="1.6"/></g></svg>
<div class="ui" style="left:94px;top:107.2px;letter-spacing:-0.366px">_source</div>
<div class="ui" style="left:631px;top:107.2px;width:912px;overflow:hidden;letter-spacing:-0.134px">{face=0x0000000061b18760 {m_move_planepts=0x0000000061b18770 {0.0000000000000000 0.000000000000...</div>
<div class="ui" style="left:1551px;top:107.2px;width:300px;overflow:hidden;letter-spacing:-0.366px">selection::Texturable</div>
<div class="sep" style="left:13px;top:129.25px;width:1840px;height:1.3px"></div>
<svg class="abs" style="left:74px;top:138.25px" width="8" height="12"><path d="M1 1 L6.5 5.5 L1 10Z" fill="none" stroke="#d8d8d8" stroke-width="1.5"/></svg>
<svg class="abs" style="left:93px;top:132.25px" width="23" height="23"><g stroke="#4ea1f3" stroke-width="1.7" stroke-linejoin="round"><path d="M1 8 L14.5 1 L21.5 7 V14 L8 21 L1 15Z" fill="#202c3c"/><path d="M1 8 L8 13 L21.5 7 M8 13 V21" fill="none"/></g></svg>
<div class="ui" style="left:120px;top:133.25px;letter-spacing:-0.366px">face</div>
<div class="ui" style="left:631px;top:133.25px;width:912px;overflow:hidden;letter-spacing:-0.116px">0x0000000061b18760 {m_move_planepts=0x0000000061b18770 {0.0000000000000000 0.0000000000000000 0...</div>
<div class="ui" style="left:1551px;top:133.25px;width:300px;overflow:hidden;letter-spacing:-0.366px">Face *</div>
<div class="sep" style="left:13px;top:155.30px;width:1840px;height:1.3px"></div>
<svg class="abs" style="left:74px;top:164.3px" width="8" height="12"><path d="M1 1 L6.5 5.5 L1 10Z" fill="none" stroke="#d8d8d8" stroke-width="1.5"/></svg>
<svg class="abs" style="left:93px;top:158.3px" width="23" height="23"><g stroke="#4ea1f3" stroke-width="1.7" stroke-linejoin="round"><path d="M1 8 L14.5 1 L21.5 7 V14 L8 21 L1 15Z" fill="#202c3c"/><path d="M1 8 L8 13 L21.5 7 M8 13 V21" fill="none"/></g></svg>
<div class="ui" style="left:120px;top:159.3px;letter-spacing:-0.366px">brush</div>
<div class="ui" style="left:631px;top:159.3px;width:912px;overflow:hidden;letter-spacing:-0.117px">0x0000000000000000 &lt;NULL&gt;</div>
<div class="ui" style="left:1551px;top:159.3px;width:300px;overflow:hidden;letter-spacing:-0.366px">Brush *</div>
<div class="sep" style="left:13px;top:181.35px;width:1840px;height:1.3px"></div>
<svg class="abs" style="left:74px;top:190.35px" width="8" height="12"><path d="M1 1 L6.5 5.5 L1 10Z" fill="none" stroke="#d8d8d8" stroke-width="1.5"/></svg>
<svg class="abs" style="left:93px;top:184.35px" width="23" height="23"><g stroke="#4ea1f3" stroke-width="1.7" stroke-linejoin="round"><path d="M1 8 L14.5 1 L21.5 7 V14 L8 21 L1 15Z" fill="#202c3c"/><path d="M1 8 L8 13 L21.5 7 M8 13 V21" fill="none"/></g></svg>
<div class="ui" style="left:120px;top:185.35px;letter-spacing:-0.366px">patch</div>
<div class="ui" style="left:631px;top:185.35px;width:912px;overflow:hidden;letter-spacing:-0.117px">0x0000000000000000 &lt;NULL&gt;</div>
<div class="ui" style="left:1551px;top:185.35px;width:300px;overflow:hidden;letter-spacing:-0.366px">Patch *</div>
<div class="sep" style="left:13px;top:207.40px;width:1840px;height:1.3px"></div>
<svg class="abs" style="left:74px;top:216.4px" width="8" height="12"><path d="M1 1 L6.5 5.5 L1 10Z" fill="none" stroke="#d8d8d8" stroke-width="1.5"/></svg>
<svg class="abs" style="left:93px;top:210.4px" width="23" height="23"><g stroke="#4ea1f3" stroke-width="1.7" stroke-linejoin="round"><path d="M1 8 L14.5 1 L21.5 7 V14 L8 21 L1 15Z" fill="#202c3c"/><path d="M1 8 L8 13 L21.5 7 M8 13 V21" fill="none"/></g></svg>
<div class="ui" style="left:120px;top:211.4px;letter-spacing:-0.366px">shader</div>
<div class="ui" style="left:631px;top:211.4px;width:912px;overflow:hidden;letter-spacing:-0.366px">""</div>
<div class="ui" style="left:1551px;top:211.4px;width:300px;overflow:hidden;letter-spacing:-0.366px">std::string</div>
<div class="sep" style="left:13px;top:233.45px;width:1840px;height:1.3px"></div>
<svg class="abs" style="left:74px;top:242.45000000000002px" width="8" height="12"><path d="M1 1 L6.5 5.5 L1 10Z" fill="none" stroke="#d8d8d8" stroke-width="1.5"/></svg>
<svg class="abs" style="left:93px;top:236.45000000000002px" width="23" height="23"><g stroke="#4ea1f3" stroke-width="1.7" stroke-linejoin="round"><path d="M1 8 L14.5 1 L21.5 7 V14 L8 21 L1 15Z" fill="#202c3c"/><path d="M1 8 L8 13 L21.5 7 M8 13 V21" fill="none"/></g></svg>
<div class="ui" style="left:120px;top:237.45000000000002px;letter-spacing:-0.366px">node</div>
<div class="ui" style="left:631px;top:237.45000000000002px;width:912px;overflow:hidden;letter-spacing:-0.366px">weak_ptr {m_brush={_owner={m_brush={_owner={m_brush={_owner={m_brush={_owner={m_brush={_owner={m_...</div>
<div class="ui" style="left:1551px;top:237.45000000000002px;width:300px;overflow:hidden;letter-spacing:-0.366px">std::weak_ptr&lt;scene::INode&gt;</div>
<div class="sep" style="left:13px;top:259.50px;width:1840px;height:1.3px"></div>
<svg class="abs" style="left:67px;top:262.5px" width="23" height="23"><g stroke="#4ea1f3" stroke-width="1.7" stroke-linejoin="round"><path d="M1 8 L14.5 1 L21.5 7 V14 L8 21 L1 15Z" fill="#202c3c"/><path d="M1 8 L8 13 L21.5 7 M8 13 V21" fill="none"/></g><g><rect x="0" y="9" width="11" height="14" fill="#1e1e1e"/><path d="M2.5 14.5 V12 A3 3 0 0 1 8.5 12 V14.5" fill="none" stroke="#e6e6e6" stroke-width="1.6"/><rect x="1" y="14.5" width="9" height="7" fill="#3a3a3a" stroke="#e6e6e6" stroke-width="1.6"/></g></svg>
<div class="ui" style="left:94px;top:263.5px;letter-spacing:-0.366px">_updatesDisabled</div>
<div class="ui" style="left:631px;top:263.5px;width:912px;overflow:hidden;letter-spacing:-0.366px">false</div>
<div class="ui" style="left:1551px;top:263.5px;width:300px;overflow:hidden;letter-spacing:-0.366px">bool</div>
<div class="sep" style="left:13px;top:285.55px;width:1840px;height:1.3px"></div>
<svg class="abs" style="left:48px;top:294.55px" width="8" height="12"><path d="M1 1 L6.5 5.5 L1 10Z" fill="none" stroke="#d8d8d8" stroke-width="1.5"/></svg>
<svg class="abs" style="left:67px;top:288.55px" width="23" height="23"><g stroke="#4ea1f3" stroke-width="1.7" stroke-linejoin="round"><path d="M1 8 L14.5 1 L21.5 7 V14 L8 21 L1 15Z" fill="#202c3c"/><path d="M1 8 L8 13 L21.5 7 M8 13 V21" fill="none"/></g><g><rect x="0" y="9" width="11" height="14" fill="#1e1e1e"/><path d="M2.5 14.5 V12 A3 3 0 0 1 8.5 12 V14.5" fill="none" stroke="#e6e6e6" stroke-width="1.6"/><rect x="1" y="14.5" width="9" height="7" fill="#3a3a3a" stroke="#e6e6e6" stroke-width="1.6"/></g></svg>
<div class="ui" style="left:94px;top:289.55px;letter-spacing:-0.366px">_signalSourceChanged</div>
<div class="ui" style="left:631px;top:289.55px;width:912px;overflow:hidden;letter-spacing:-0.366px">{...}</div>
<div class="ui" style="left:1551px;top:289.55px;width:300px;overflow:hidden;letter-spacing:-0.366px">sigc::signal&lt;void,sigc::nil,sigc::nil,sigc...</div>
<div class="sep" style="left:13px;top:311.60px;width:1840px;height:1.3px"></div>
<svg class="abs" style="left:48px;top:320.6px" width="8" height="12"><path d="M1 1 L6.5 5.5 L1 10Z" fill="none" stroke="#d8d8d8" stroke-width="1.5"/></svg>
<svg class="abs" style="left:67px;top:314.6px" width="23" height="23"><g stroke="#4ea1f3" stroke-width="1.7" stroke-linejoin="round"><path d="M1 8 L14.5 1 L21.5 7 V14 L8 21 L1 15Z" fill="#202c3c"/><path d="M1 8 L8 13 L21.5 7 M8 13 V21" fill="none"/></g></svg>
<div class="ui" style="left:94px;top:315.6px;letter-spacing:-0.366px">_sourceHolder</div>
<div class="ui" style="left:631px;top:315.6px;width:912px;overflow:hidden;letter-spacing:-0.222px">{_data=0x0000000007c0a7f0 {_p=0x0000000100550860 {DarkRadiantCore.dll!sigc::...</div>
<div class="ui" style="left:1551px;top:315.6px;width:300px;overflow:hidden;letter-spacing:-0.366px">sigc::connection</div>
<div class="sep" style="left:13px;top:337.65px;width:1840px;height:1.3px"></div>
<div class="sep" style="left:625px;top:0;width:1.3px;height:330px"></div>
<div class="sep" style="left:1545px;top:0;width:1.3px;height:330px"></div>
<svg class="abs" style="left:1463px;top:211.4px" width="20" height="20"><circle cx="8" cy="8" r="6.2" fill="#343434" stroke="#d0d0d0" stroke-width="1.5"/><path d="M12.5 12.5 L18 18" stroke="#d0d0d0" stroke-width="1.6"/></svg>
<div class="ui" style="left:1484px;top:211.4px;letter-spacing:-0.366px">View</div>
<svg class="abs" style="left:1528px;top:217.9px" width="13" height="7"><path d="M0.5 0.5 H12.5 L6.5 6Z" fill="#d8d8d8"/></svg>
</div>
<div class="abs" style="left:1853px;top:1455px;width:26px;height:354px;background:#2e2e2e"></div>
<svg class="abs" style="left:1860px;top:1464px" width="13" height="8"><path d="M0.5 7.5 H12.5 L6.5 0.5Z" fill="#9a9a9a"/></svg>
<div class="abs" style="left:1860px;top:1481px;width:13px;height:227px;background:#4e4e4e"></div>
<svg class="abs" style="left:1860px;top:1793px" width="13" height="8"><path d="M0.5 0.5 H12.5 L6.5 7.5Z" fill="#9a9a9a"/></svg>
<div class="abs" style="left:62px;top:1809px;width:1819px;height:2px;background:#3f3f3f"></div>
<div class="abs" style="left:62px;top:1809px;width:2px;height:33px;background:#3f3f3f"></div>
<div class="abs" style="left:0;top:1840px;width:64px;height:2px;background:#3f3f3f"></div>
<div class="ui" style="left:8px;top:1815px;color:#f6f6f6;letter-spacing:-0.366px">Autos</div>
<div class="ui" style="left:74px;top:1815px;color:#a8a8a8;letter-spacing:-0.366px">Locals</div>
<div class="ui" style="left:141px;top:1815px;color:#a8a8a8;letter-spacing:-0.314px">Watch 1</div>
<div class="ui" style="left:1898px;top:1388px;color:#a8a8a8;letter-spacing:-0.366px">Call Stack</div>
<div class="abs" style="left:1891px;top:1415px;width:1px;height:29px;background:#3f3f3f"></div>
<div class="abs" style="left:1916px;top:1415px;width:1px;height:29px;background:#3f3f3f"></div>
<div class="abs" style="left:1892px;top:1444px;width:1210px;height:1px;background:#3f3f3f"></div>
<div class="ui" style="left:1922px;top:1420px;letter-spacing:-0.366px">Name</div>
<div class="ui" style="left:1921px;top:1449.0px;color:#f1f1f1;letter-spacing:-0.355px">DarkRadiantCore.dll!selection::ShaderClipboard::setSourceShader(const std::string &amp; shader) Line 127</div>
<div class="sep" style="left:1892px;top:1471.00px;width:1210px;height:1.3px"></div>
<div class="ui" style="left:1921px;top:1475.0px;color:#f1f1f1;letter-spacing:-0.354px">DarkRadiant.exe!ui::MediaBrowser::_onTreeViewSelectionChanged(wxDataViewEvent &amp; ev) Line 189</div>
<div class="sep" style="left:1892px;top:1497.00px;width:1210px;height:1.3px"></div>
<div class="ui" style="left:1921px;top:1501.0px;color:#a0a0a0;letter-spacing:-0.366px">[External Code]</div>
<div class="sep" style="left:1892px;top:1523.00px;width:1210px;height:1.3px"></div>
<div class="ui" style="left:1921px;top:1527.0px;color:#f1f1f1;letter-spacing:-0.355px">DarkRadiant.exe!wxutil::TreeView::SendSelectionChangeEvent(const wxDataViewItem &amp; item) Line 228</div>
<div class="sep" style="left:1892px;top:1549.00px;width:1210px;height:1.3px"></div>
<div class="ui" style="left:1921px;top:1553.0px;color:#f1f1f1;letter-spacing:-0.358px">DarkRadiant.exe!wxutil::ResourceTreeView::SetSelectedElement(const std::string &amp; value, const wxutil::TreeModel::Column &amp; column) Line 364</div>
<div class="sep" style="left:1892px;top:1575.00px;width:1210px;height:1.3px"></div>
<div class="ui" style="left:1921px;top:1579.0px;color:#f1f1f1;letter-spacing:-0.359px">DarkRadiant.exe!wxutil::DeclarationTreeView::SetSelectedDeclName(const std::string &amp; declName) Line 32</div>
<div class="sep" style="left:1892px;top:1601.00px;width:1210px;height:1.3px"></div>
<div class="ui" style="left:1921px;top:1605.0px;color:#f1f1f1;letter-spacing:-0.353px">DarkRadiant.exe!ui::MediaBrowser::setSelection(const std::string &amp; selection) Line 169</div>
<div class="sep" style="left:1892px;top:1627.00px;width:1210px;height:1.3px"></div>
<div class="ui" style="left:1921px;top:1631.0px;color:#f1f1f1;letter-spacing:-0.344px">DarkRadiant.exe!ui::MediaBrowser::onIdle() Line 102</div>
<div class="sep" style="left:1892px;top:1653.00px;width:1210px;height:1.3px"></div>
<div class="ui" style="left:1921px;top:1657.0px;color:#f1f1f1;letter-spacing:-0.356px">DarkRadiant.exe!wxutil::SingleIdleCallback::handleIdleCallback() Line 50</div>
<div class="sep" style="left:1892px;top:1679.00px;width:1210px;height:1.3px"></div>
<div class="ui" style="left:1921px;top:1683.0px;color:#f1f1f1;letter-spacing:-0.359px">DarkRadiant.exe!wxutil::SingleIdleCallback::InternalEventHandler::_onIdle(wxIdleEvent &amp; __formal) Line 38</div>
<div class="sep" style="left:1892px;top:1705.00px;width:1210px;height:1.3px"></div>
<div class="ui" style="left:1921px;top:1709.0px;color:#a0a0a0;letter-spacing:-0.366px">[External Code]</div>
<div class="sep" style="left:1892px;top:1731.00px;width:1210px;height:1.3px"></div>
<div class="ui" style="left:1921px;top:1735.0px;color:#f1f1f1;letter-spacing:-0.363px">DarkRadiant.exe!WinMain(HINSTANCE__ * hInstance, HINSTANCE__ * hPrevInstance, char * lpCmdLine, int nCmdShow) Line 7</div>
<div class="sep" style="left:1892px;top:1757.00px;width:1210px;height:1.3px"></div>
<div class="ui" style="left:1921px;top:1761.0px;color:#a0a0a0;letter-spacing:-0.366px">[External Code]</div>
<div class="sep" style="left:1892px;top:1783.00px;width:1210px;height:1.3px"></div>
<div class="sep" style="left:1916px;top:1445px;width:1.3px;height:338.0px"></div>
<svg class="abs" style="left:1894px;top:1449.0px" width="21" height="20"><path d="M1.5 6 H10 V1.5 L19 10 L10 18.5 V14 H1.5Z" fill="#c89000" stroke="#e0e0e0" stroke-width="1.3" stroke-linejoin="round"/></svg>
<div class="abs" style="left:1980px;top:1809px;width:1122px;height:2px;background:#3f3f3f"></div>
<div class="abs" style="left:1980px;top:1809px;width:2px;height:33px;background:#3f3f3f"></div>
<div class="abs" style="left:1890px;top:1840px;width:92px;height:2px;background:#3f3f3f"></div>
<div class="ui" style="left:1900px;top:1815px;color:#f6f6f6;letter-spacing:-0.366px">Call Stack</div>
<div class="ui" style="left:1993px;top:1815px;color:#a8a8a8;letter-spacing:-0.366px">Breakpoints</div>
<div class="ui" style="left:2105px;top:1815px;color:#a8a8a8;letter-spacing:-0.366px">Exception Settings</div>
<div class="ui" style="left:2269px;top:1815px;color:#a8a8a8;letter-spacing:-0.366px">Command Window</div>
<div class="ui" style="left:2443px;top:1815px;color:#a8a8a8;letter-spacing:-0.366px">Immediate Window</div>
<div class="ui" style="left:2618px;top:1815px;color:#a8a8a8;letter-spacing:-0.366px">Output</div>
<div class="abs" style="left:0;top:1851px;width:3102px;height:13px;background:#881d31"></div>
<div class="abs" style="left:-2px;top:1858px;width:21px;height:10px;background:#a03a50;border:1.5px solid #f4eef0;border-radius:1px"></div>
<svg class="abs" style="left:0;top:0" width="3102" height="1864" fill="none" stroke="#e21d20" stroke-width="6" stroke-linecap="round" stroke-linejoin="round">
<path d="M294.3 328.9 C291.1 328.3 284.6 326.6 274.9 325.6 C265.2 324.6 247.9 323.3 236.0 323.0 C224.1 322.7 212.2 322.9 203.6 323.7 C195.0 324.5 191.8 325.5 184.2 327.6 C176.6 329.8 165.6 333.6 158.3 336.6 C151.0 339.6 144.6 342.7 140.5 345.7 C136.4 348.7 133.8 352.0 133.8 354.8 C133.8 357.6 135.2 359.1 140.5 362.5 C145.8 365.9 157.1 371.8 165.5 375.0 C173.9 378.2 180.0 380.3 190.7 382.0 C201.4 383.7 214.4 384.6 229.5 385.0 C244.6 385.4 268.3 385.2 281.3 384.5 C294.3 383.8 294.4 383.7 307.3 380.7 C320.2 377.7 345.0 371.4 359.0 366.4 C373.0 361.4 384.7 355.4 391.4 350.9 C398.1 346.4 400.3 343.1 399.2 339.2 C398.1 335.3 391.2 330.9 385.0 327.6 C378.8 324.3 370.6 321.9 362.0 319.5 C353.4 317.1 343.5 314.3 333.2 313.3 C322.9 312.3 308.6 313.2 300.0 313.5 C291.4 313.8 290.2 314.2 281.3 315.3 C272.4 316.4 252.2 319.5 246.4 320.4" stroke-width="6"/>
<path d="M476.8 1599.2 C488.0 1599.2 530.8 1599.1 543.8 1599.2 C556.8 1599.3 549.9 1599.7 554.8 1599.9 C559.7 1600.1 568.8 1600.0 573.0 1600.6 C577.2 1601.2 577.3 1602.7 580.3 1603.5 C583.3 1604.3 586.4 1605.6 591.2 1605.7 C596.1 1605.8 606.4 1604.5 609.4 1604.3" stroke-width="5.8"/>
<path d="M583.9 1583.8 C585.7 1584.7 591.5 1587.3 594.8 1589.0 C598.1 1590.7 601.6 1592.3 603.6 1594.0 C605.6 1595.7 605.5 1597.6 606.5 1599.2 C607.5 1600.8 610.1 1601.6 609.4 1603.5 C608.7 1605.4 605.4 1607.6 602.1 1610.8 C598.8 1614.0 591.8 1620.5 589.7 1622.5" stroke-width="5.8"/>
<path d="M1904.7 1432.8 C1903.5 1432.7 1900.3 1431.3 1897.6 1432.2 C1894.9 1433.1 1891.7 1435.7 1888.7 1437.9 C1885.7 1440.1 1881.5 1443.0 1879.7 1445.6 C1877.9 1448.2 1877.8 1449.0 1877.8 1453.3 C1877.8 1457.6 1878.8 1464.4 1879.7 1471.2 C1880.7 1478.0 1881.6 1488.3 1883.5 1494.3 C1885.4 1500.3 1889.3 1502.7 1891.2 1507.0 C1893.1 1511.3 1894.4 1514.8 1895.0 1519.9 C1895.6 1525.0 1895.8 1531.4 1895.0 1537.8 C1894.2 1544.2 1891.8 1551.9 1889.9 1558.3 C1888.0 1564.7 1886.0 1571.8 1883.5 1576.2 C1881.0 1580.6 1879.1 1582.2 1874.6 1584.5 C1870.1 1586.8 1857.9 1588.5 1856.6 1590.3 C1855.3 1592.1 1863.5 1592.4 1866.9 1595.4 C1870.3 1598.4 1875.2 1602.9 1877.1 1608.2 C1879.0 1613.5 1877.4 1619.4 1878.4 1627.0 C1879.4 1634.6 1882.0 1646.1 1883.1 1653.9 C1884.2 1661.8 1885.1 1666.2 1885.1 1674.1 C1885.1 1682.0 1883.8 1692.1 1883.1 1701.1 C1882.4 1710.1 1881.3 1719.7 1881.1 1728.0 C1880.9 1736.3 1880.8 1745.4 1881.8 1751.0 C1882.8 1756.6 1884.5 1759.0 1887.2 1761.7 C1889.9 1764.4 1894.6 1764.8 1898.0 1767.1 C1901.4 1769.3 1903.8 1771.9 1907.4 1775.2 C1911.0 1778.5 1917.5 1784.8 1919.5 1786.7" stroke-width="5.6"/>
</svg>
</body></html>
